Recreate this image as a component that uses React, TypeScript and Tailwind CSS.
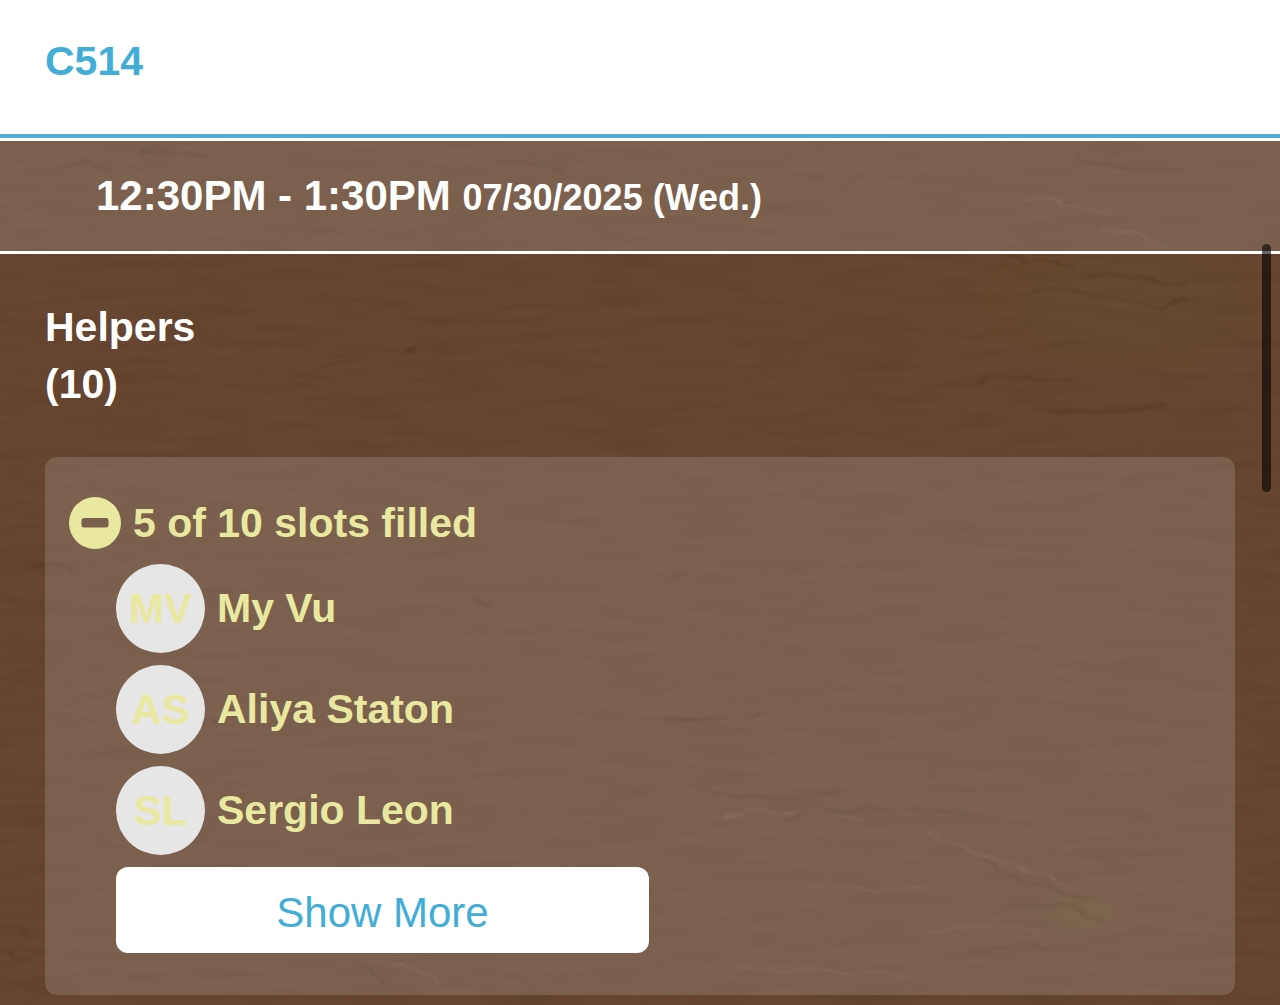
const helpers = [
  { initials: "MV", name: "My Vu" },
  { initials: "AS", name: "Aliya Staton" },
  { initials: "SL", name: "Sergio Leon" },
];

function WoodGrain() {
  return (
    <svg
      aria-hidden="true"
      className="absolute inset-0 -z-10 h-full w-full"
      viewBox="0 0 1280 867"
      preserveAspectRatio="none"
    >
      <defs>
        <filter id="grain" x="0" y="0" width="100%" height="100%" colorInterpolationFilters="sRGB">
          <feTurbulence type="fractalNoise" baseFrequency="0.012 0.09" numOctaves="4" seed="8" />
          <feColorMatrix values="0 0 0 0 0.2  0 0 0 0 0.12  0 0 0 0 0.04  1.5 0 0 0 -0.68" />
        </filter>
        <filter id="soft" x="-20%" y="-20%" width="140%" height="140%">
          <feTurbulence type="fractalNoise" baseFrequency="0.03 0.08" numOctaves="2" seed="3" />
          <feDisplacementMap in="SourceGraphic" scale="14" xChannelSelector="R" yChannelSelector="G" />
          <feGaussianBlur stdDeviation="1" />
        </filter>
        <radialGradient id="patch">
          <stop offset="0" stopColor="#62502f" stopOpacity="0.45" />
          <stop offset="1" stopColor="#62502f" stopOpacity="0" />
        </radialGradient>
      </defs>
      <rect width="1280" height="867" fill="#664630" />
      <rect width="1280" height="867" filter="url(#grain)" opacity="0.17" />
      <ellipse cx="1130" cy="165" rx="170" ry="80" fill="url(#patch)" />
      <ellipse cx="1075" cy="775" rx="60" ry="28" fill="url(#patch)" />
      <g fill="none" stroke="#4b321b" strokeWidth="2" strokeLinecap="round" opacity="0.4" filter="url(#soft)">
        <path d="M140 10q40 3 68 10M60 29q28-6 50 1M500 25q30 0 66 9M1075 20q55 15 105 12" />
        <path d="M1000 115q32 10 78 12M1090 136q52 2 98 11M1020 156q50-9 85 3M1120 162q35 12 63-2" />
        <path d="M510 167h49M404 212q22-1 44-8M320 228l36-5M1035 270q65 10 128-3M975 245q50-10 95-4" />
        <path d="M475 460q11 1 20 8l-22-4M215 585q20-11 29-7M668 580q48 4 92-5M700 654q80 10 142 0" />
        <path d="M780 681q88-16 192-4M974 714q48 34 117 46M1000 769q65-8 104 12M970 812q57-9 118 3" />
        <path d="M2 792q12-10 24 2M6 817q12 5 28-2M350 821l35 22M25 430q28-9 49 2" />
      </g>
      <g fill="none" stroke="#92755a" strokeWidth="2" strokeLinecap="round" opacity="0.22" filter="url(#soft)">
        <path d="M1022 61q44-2 90 17M1100 95q42-4 85 21M720 678q65-11 145 2M930 697l142 52" />
        <path d="M810 745q80 12 120 2M900 794q60-10 137-2M740 835q80-9 171 5M395 825q20 3 43 20" />
      </g>
    </svg>
  );
}

export default function App() {
  return (
    <div className="relative flex min-h-screen flex-col bg-[#654630] font-['Liberation_Sans',Arial,sans-serif] text-[42px] leading-[57px] font-bold text-white">
      <header className="border-b-4 border-[#50afd6] bg-white px-[45px] pt-[33px] pb-11 text-[41px] text-[#42add6]">
        <h1>C514</h1>
      </header>

      <main className="relative isolate grow">
        <WoodGrain />
        <h2 className="border-y-[3px] border-white bg-white/15 bg-clip-padding px-24 pt-[26px] pb-[25px]">
          12:30PM - 1:30PM <span className="text-[36px]">07/30/2025 (Wed.)</span>
        </h2>

        <section className="px-[45px] pt-[45px] pb-2.5">
          <h3 className="text-[41px]">
            Helpers
            <br />
            (10)
          </h3>

          <div className="mt-11 rounded-xl bg-white/15 px-6 pt-10 pb-[42px] text-[41px] text-[#e9e8a0]">
            <div className="flex items-center gap-3">
              <svg aria-hidden="true" className="size-[52px] shrink-0" viewBox="0 0 52 52">
                <path
                  fill="currentColor"
                  fillRule="evenodd"
                  d="M26 0a26 26 0 1 1 0 52a26 26 0 0 1 0-52ZM15 21a2.5 2.5 0 0 0-2.5 2.5v4.500A2.500 2.500 0 0 0 15 30.500h22a2.500 2.500 0 0 0 2.500-2.500v-4.500A2.500 2.500 0 0 0 37 21Z"
                />
              </svg>
              <p className="-my-1">5 of 10 slots filled</p>
            </div>

            <ul className="mt-[15px] flex flex-col gap-3 pl-[47px]">
              {helpers.map((helper) => (
                <li key={helper.name} className="flex items-center gap-3">
                  <span className="flex size-[89px] shrink-0 items-center justify-center rounded-full bg-[#e6e6e6] text-[42px]">
                    {helper.initials}
                  </span>
                  <span>{helper.name}</span>
                </li>
              ))}
              <li>
                <button
                  type="button"
                  className="h-[86px] w-[533px] max-w-full rounded-xl bg-white pt-1 text-[42px] font-normal text-[#42add6]"
                >
                  Show More
                </button>
              </li>
            </ul>
          </div>
        </section>
      </main>

      <div className="absolute top-[244px] right-[9px] h-[248px] w-[9px] rounded-full bg-black/60" />
    </div>
  );
}
